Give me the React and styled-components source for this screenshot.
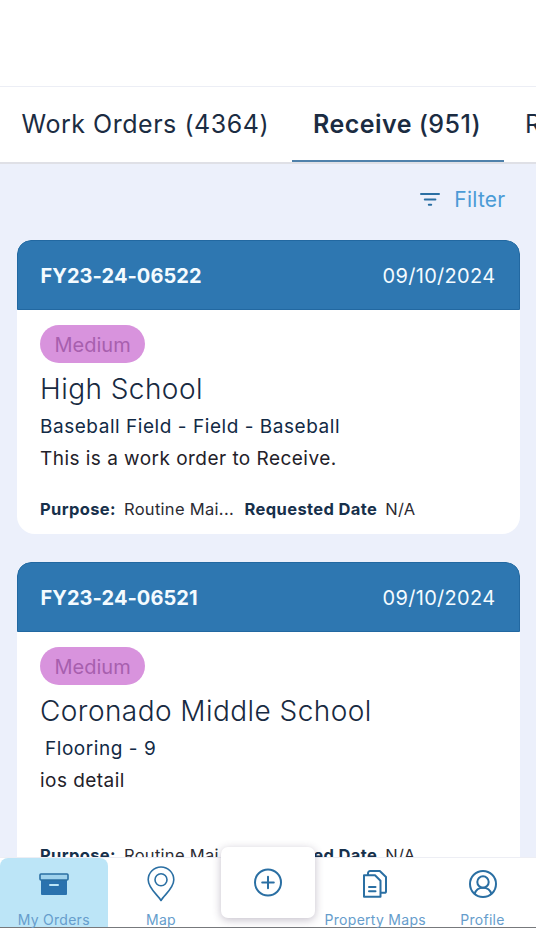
import React from 'react';
import styled, { createGlobalStyle } from 'styled-components';

const GlobalStyle = createGlobalStyle`
  * { box-sizing: border-box; }
  body { margin: 0; background: #fff; font-family: Inter, sans-serif; }
`;

const Screen = styled.div`
  display: flex;
  flex-direction: column;
  width: 536px;
  height: 928px;
  overflow: hidden;
  background: #ecf0fb;
`;

const StatusArea = styled.header`
  flex: none;
  height: 87px;
  background: #fff;
  border-bottom: 1px solid #eceef5;
`;

const TabBar = styled.nav`
  flex: none;
  display: flex;
  height: 77px;
  overflow: hidden;
  background: #fff;
  border-bottom: 2px solid #dfe0e6;
`;

const Tab = styled.button`
  flex: none;
  height: 75px;
  padding: 0 22.5px 0 21.5px;
  border: 0;
  border-bottom: 2px solid ${(p) => (p.$active ? '#4f81ab' : 'transparent')};
  background: none;
  color: #1b2c42;
  font: ${(p) => (p.$active ? 600 : 400)} 25px Inter, sans-serif;
  letter-spacing: ${(p) => (p.$active ? 0.45 : 0.53)}px;
  white-space: nowrap;
`;

const TabCount = styled.span`
  font-weight: ${(p) => (p.$active ? 500 : 400)};
`;

const FilterRow = styled.div`
  flex: none;
  display: flex;
  justify-content: flex-end;
  align-items: center;
  height: 76px;
  padding: 0 30.5px 5px 0;
`;

const FilterButton = styled.button`
  display: flex;
  align-items: center;
  gap: 14px;
  padding: 0;
  border: 0;
  background: none;
  color: #4b9bd6;
  font: 400 21px Inter, sans-serif;
  letter-spacing: 0.25px;
`;

const CardList = styled.main`
  flex: 1;
  min-height: 0;
  display: flex;
  flex-direction: column;
  gap: 28px;
  padding: 0 16px 0 17px;
  overflow: hidden;
`;

const Card = styled.article`
  flex: none;
  height: ${(p) => (p.$tall ? 318 : 294)}px;
  border-radius: 14px 14px 18px 18px;
  background: #fff;
  overflow: hidden;
`;

const CardHeader = styled.div`
  display: flex;
  justify-content: space-between;
  align-items: center;
  height: 70px;
  padding: 2px 23.5px 0 22.5px;
  border: 1px solid #2268a1;
  background: #2e77b1;
  color: #f4fbff;
  border-radius: 14px 14px 0 0;
  font-size: 20px;
`;

const OrderNumber = styled.strong`
  font-weight: 700;
  letter-spacing: 0.05px;
`;

const OrderDate = styled.span`
  letter-spacing: 0.32px;
`;

const CardBody = styled.div`
  display: flex;
  flex-direction: column;
  align-items: flex-start;
  padding: 15px 23px 0;
`;

const Badge = styled.span`
  height: 38px;
  padding: 0 14.5px;
  border-radius: 19px;
  background: #d893dd;
  color: #a75fae;
  font-size: 20px;
  line-height: 41px;
`;

const Title = styled.h2`
  margin: 8px 0 0;
  color: #182a41;
  font-size: 28px;
  font-weight: 350;
  line-height: 36px;
  letter-spacing: 0.44px;
`;

const Location = styled.p`
  margin: 4px 0 0;
  padding-left: ${(p) => (p.$indent ? 5 : 0)}px;
  color: #122a45;
  font-size: 19px;
  font-weight: 400;
  line-height: 32px;
  letter-spacing: 0.54px;
`;

const Description = styled.p`
  margin: 0;
  height: ${(p) => (p.$tall ? 71 : 47)}px;
  color: #232129;
  font-size: 19px;
  line-height: 31px;
  letter-spacing: 0.46px;
`;

const Meta = styled.div`
  display: flex;
  align-items: center;
  margin-top: 3px;
  height: 32px;
  color: #2c2b33;
  font-size: 16.5px;
  letter-spacing: 0.3px;
  white-space: nowrap;
`;

const MetaLabel = styled.strong`
  margin-right: 8px;
  color: #17304b;
  font-weight: 700;
  letter-spacing: 0.38px;
`;

const MetaValue = styled.span`
  margin-right: 10.5px;
`;

const BottomNav = styled.nav`
  flex: none;
  position: relative;
  z-index: 1;
  display: grid;
  grid-template-columns: 107.5px 107px 107px 107.5px 107px;
  height: 71px;
  border-top: 1px solid #edeef4;
  border-bottom: 1px solid #77797c;
  background: #fff;
`;

const NavItem = styled.button`
  display: grid;
  grid-template-rows: 51px 20px;
  justify-items: center;
  align-items: center;
  min-width: 0;
  height: 69px;
  padding: 0;
  border: 0;
  border-radius: 8px 8px 0 0;
  background: ${(p) => (p.$active ? '#bce5f7' : 'transparent')};
  color: #669dcc;
  font: 400 14px Inter, sans-serif;
  letter-spacing: 0.28px;
  white-space: nowrap;
`;

const AddButton = styled.button`
  display: flex;
  justify-content: center;
  align-items: center;
  justify-self: center;
  width: 94px;
  height: 71px;
  margin-top: -11px;
  padding: 0;
  border: 0;
  border-radius: 7px;
  background: #fff;
  box-shadow: 0 2px 9px rgba(70, 55, 90, 0.32);
`;

const Icon = styled.svg`
  display: block;
  fill: none;
  stroke: #2a6fa3;
  stroke-width: 2;
  stroke-linecap: round;
  stroke-linejoin: round;
`;

const FilterIcon = () => (
  <Icon width="20" height="14" viewBox="0 0 20 14">
    <path d="M1 1h18M4.8 6.4h10.6M8.8 11.8h2.4" />
  </Icon>
);

const OrdersIcon = () => (
  <Icon width="32" height="24" viewBox="0 0 32 24">
    <path d="M3 8h26v14a1 1 0 0 1-1 1H4a1 1 0 0 1-1-1z" fill="#2a72ae" stroke="none" />
    <rect x="2" y="2" width="28" height="6" rx="1" fill="#9fd2ed" strokeWidth="1.6" />
    <path d="M12 13h8" stroke="#bce5f7" />
  </Icon>
);

const MapIcon = () => (
  <Icon width="28" height="36" viewBox="0 0 28 36">
    <path d="M14 34.5C11 29 1.2 22.5 1.2 13.8a12.8 12.8 0 0 1 25.6 0C26.8 22.5 17 29 14 34.5z" strokeWidth="1.6" />
    <circle cx="14" cy="13.7" r="6" strokeWidth="1.6" />
  </Icon>
);

const AddIcon = () => (
  <Icon width="30" height="30" viewBox="0 0 30 30">
    <circle cx="15" cy="14.5" r="13" />
    <path d="M9.2 14.5h11.6M15 8.7v11.6" />
  </Icon>
);

const DocumentsIcon = () => (
  <Icon width="26" height="30" viewBox="0 0 26 30">
    <path d="M2 6.2h11l5.5 5.5v16.1H2z" />
    <path d="M6 5.8V4.2A2.2 2.2 0 0 1 8.2 2h9.6l6.2 6v14.2a1.6 1.6 0 0 1-1.6 1.6h-3.4" />
    <path d="M7 18h6.5M7 22.2h6.5" />
  </Icon>
);

const ProfileIcon = () => (
  <Icon width="30" height="30" viewBox="0 0 30 30">
    <circle cx="15" cy="15" r="13" />
    <circle cx="15" cy="13" r="5.7" />
    <path d="M6.7 24.8c1.2-4.2 4.5-6.1 8.3-6.1s7.1 1.9 8.3 6.1" />
  </Icon>
);

const orders = [
  {
    number: 'FY23-24-06522',
    title: 'High School',
    location: 'Baseball Field - Field - Baseball',
    description: 'This is a work order to Receive.',
  },
  {
    number: 'FY23-24-06521',
    title: 'Coronado Middle School',
    location: 'Flooring - 9',
    description: 'ios detail',
    indent: true,
    tall: true,
  },
];

const OrderCard = ({ order }) => (
  <Card $tall={order.tall}>
    <CardHeader>
      <OrderNumber>{order.number}</OrderNumber>
      <OrderDate>09/10/2024</OrderDate>
    </CardHeader>
    <CardBody>
      <Badge>Medium</Badge>
      <Title>{order.title}</Title>
      <Location $indent={order.indent}>{order.location}</Location>
      <Description $tall={order.tall}>{order.description}</Description>
      <Meta>
        <MetaLabel>Purpose:</MetaLabel>
        <MetaValue>Routine Mai...</MetaValue>
        <MetaLabel>Requested Date</MetaLabel>
        <MetaValue>N/A</MetaValue>
      </Meta>
    </CardBody>
  </Card>
);

export default function App() {
  return (
    <>
      <GlobalStyle />
      <Screen>
        <StatusArea />
        <TabBar>
          <Tab>
            Work Orders <TabCount>(4364)</TabCount>
          </Tab>
          <Tab $active>
            Receive <TabCount $active>(951)</TabCount>
          </Tab>
          <Tab>R</Tab>
        </TabBar>
        <FilterRow>
          <FilterButton>
            <FilterIcon />
            Filter
          </FilterButton>
        </FilterRow>
        <CardList>
          {orders.map((order) => (
            <OrderCard key={order.number} order={order} />
          ))}
        </CardList>
        <BottomNav>
          <NavItem $active>
            <OrdersIcon />
            My Orders
          </NavItem>
          <NavItem>
            <MapIcon />
            Map
          </NavItem>
          <AddButton aria-label="Add">
            <AddIcon />
          </AddButton>
          <NavItem>
            <DocumentsIcon />
            Property Maps
          </NavItem>
          <NavItem>
            <ProfileIcon />
            Profile
          </NavItem>
        </BottomNav>
      </Screen>
    </>
  );
}
